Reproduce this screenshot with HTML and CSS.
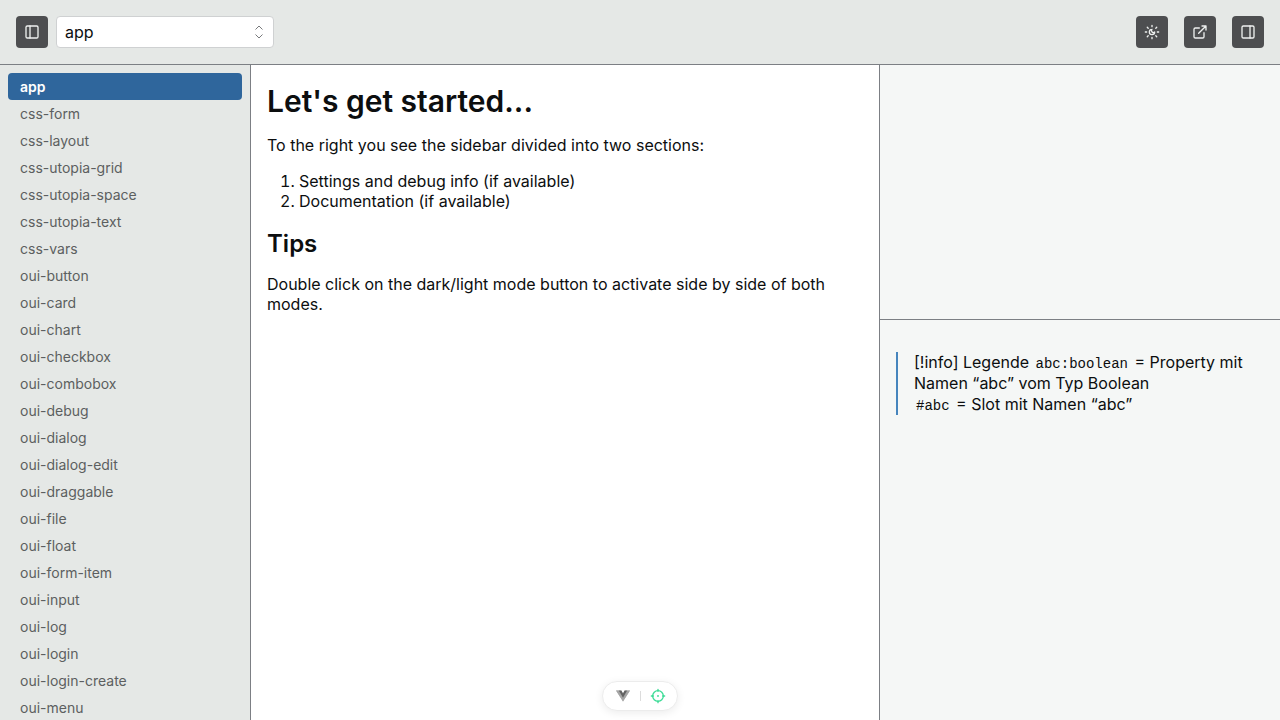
FILE: index.html
```html
<!DOCTYPE html>
<html lang="en">
<head>
<meta charset="utf-8">
<meta name="viewport" content="width=device-width, initial-scale=1">
<title>app</title>
<link rel="stylesheet" href="styles.css">
</head>
<body>
<div class="app">
  <header class="topbar">
    <button class="icon-button" type="button" aria-label="Toggle navigation">
      <svg viewBox="0 0 24 24"><rect x="3" y="3" width="18" height="18" rx="2"/><path d="M9 3v18"/></svg>
    </button>
    <div class="picker">
      <select class="picker-select" aria-label="Component">
        <option>app</option>
        <option>css-form</option>
        <option>css-layout</option>
      </select>
      <svg class="picker-arrows" viewBox="0 0 10 14"><path d="M1.500 4.500 5 1l3.500 3.500M1.500 9.500 5 13l3.500-3.500"/></svg>
    </div>
    <div class="actions">
      <button class="icon-button" type="button" aria-label="Dark or light mode">
        <svg viewBox="0 0 24 24"><path d="M12 8a2.830 2.830 0 0 0 4 4 4 4 0 1 1-4-4"/><path d="M12 2v2M12 20v2M4.900 4.900l1.400 1.400M17.700 17.700l1.400 1.400M2 12h2M20 12h2M6.300 17.700l-1.400 1.400M19.100 4.900l-1.400 1.400"/></svg>
      </button>
      <button class="icon-button" type="button" aria-label="Open in new window">
        <svg viewBox="0 0 24 24"><path d="M18 13v6a2 2 0 0 1-2 2H5a2 2 0 0 1-2-2V8a2 2 0 0 1 2-2h6"/><path d="M15 3h6v6M10 14 21 3"/></svg>
      </button>
      <button class="icon-button" type="button" aria-label="Toggle sidebar">
        <svg viewBox="0 0 24 24"><rect x="3" y="3" width="18" height="18" rx="2"/><path d="M15 3v18"/></svg>
      </button>
    </div>
  </header>
  <div class="columns">
    <nav class="nav" aria-label="Components">
      <a class="nav-link active" href="#app">app</a>
      <a class="nav-link" href="#css-form">css-form</a>
      <a class="nav-link" href="#css-layout">css-layout</a>
      <a class="nav-link" href="#css-utopia-grid">css-utopia-grid</a>
      <a class="nav-link" href="#css-utopia-space">css-utopia-space</a>
      <a class="nav-link" href="#css-utopia-text">css-utopia-text</a>
      <a class="nav-link" href="#css-vars">css-vars</a>
      <a class="nav-link" href="#oui-button">oui-button</a>
      <a class="nav-link" href="#oui-card">oui-card</a>
      <a class="nav-link" href="#oui-chart">oui-chart</a>
      <a class="nav-link" href="#oui-checkbox">oui-checkbox</a>
      <a class="nav-link" href="#oui-combobox">oui-combobox</a>
      <a class="nav-link" href="#oui-debug">oui-debug</a>
      <a class="nav-link" href="#oui-dialog">oui-dialog</a>
      <a class="nav-link" href="#oui-dialog-edit">oui-dialog-edit</a>
      <a class="nav-link" href="#oui-draggable">oui-draggable</a>
      <a class="nav-link" href="#oui-file">oui-file</a>
      <a class="nav-link" href="#oui-float">oui-float</a>
      <a class="nav-link" href="#oui-form-item">oui-form-item</a>
      <a class="nav-link" href="#oui-input">oui-input</a>
      <a class="nav-link" href="#oui-log">oui-log</a>
      <a class="nav-link" href="#oui-login">oui-login</a>
      <a class="nav-link" href="#oui-login-create">oui-login-create</a>
      <a class="nav-link" href="#oui-menu">oui-menu</a>
    </nav>
    <main class="content">
      <h1>Let's get started...</h1>
      <p>To the right you see the sidebar divided into two sections:</p>
      <ol>
        <li>Settings and debug info (if available)</li>
        <li>Documentation (if available)</li>
      </ol>
      <h2>Tips</h2>
      <p>Double click on the dark/light mode button to activate side by side of both modes.</p>
    </main>
    <aside class="side">
      <section class="settings" aria-label="Settings"></section>
      <section class="docs" aria-label="Documentation">
        <blockquote>[!info] Legende <code>abc:boolean</code> = Property mit Namen “abc” vom Typ Boolean<br><code>#abc</code> = Slot mit Namen “abc”</blockquote>
      </section>
    </aside>
  </div>
</div>
<div class="devtools">
  <button class="tool" type="button" aria-label="Toggle devtools">
    <svg viewBox="0 0 256 198"><path fill="#b5b5b5" d="M204.800 0H256L128 198 0 0h97.920L128 51.200 157.440 0z"/><path fill="#a5a5a5" d="m0 0 128 198L256 0h-51.200L128 132.480 50.560 0z"/><path fill="#626262" d="m50.560 0 77.440 133.120L204.800 0h-47.360L128 51.200 97.920 0z"/></svg>
  </button>
  <span class="divider"></span>
  <button class="tool inspect" type="button" aria-label="Inspect component">
    <svg viewBox="0 0 24 24"><circle cx="12" cy="12" r="8"/><path d="M12 2v3M12 19v3M2 12h3M19 12h3"/><circle cx="12" cy="12" r=".5"/></svg>
  </button>
</div>
</body>
</html>
```
FILE: styles.css
```css
* { box-sizing: border-box; }

body {
  margin: 0;
  font: 16px/20px Inter, "Liberation Sans", sans-serif;
  color: #0c0e0f;
  background: #fff;
}

.app {
  display: flex;
  flex-direction: column;
  height: 100vh;
  overflow: hidden;
}

.topbar {
  display: flex;
  flex: none;
  align-items: center;
  gap: 8px;
  padding: 16px;
  background: #e5e8e6;
  border-bottom: 1px solid #7c7f84;
}

.icon-button {
  display: grid;
  place-items: center;
  width: 32px;
  height: 32px;
  padding: 0;
  border: 0;
  border-radius: 4px;
  background: #4d4e50;
  color: #eef0ef;
}

.icon-button svg {
  width: 16px;
  height: 16px;
  fill: none;
  stroke: currentColor;
  stroke-width: 2;
  stroke-linecap: round;
  stroke-linejoin: round;
}

.picker {
  display: grid;
  align-items: center;
  width: 218px;
}

.picker > * { grid-area: 1 / 1; }

.picker-select {
  appearance: none;
  width: 100%;
  height: 32px;
  padding: 0 32px 0 8px;
  border: 1px solid #cfd1d2;
  border-radius: 4px;
  background: #fff;
  color: #0c0e0f;
  font: inherit;
}

.picker-arrows {
  justify-self: end;
  width: 10px;
  height: 14px;
  margin-right: 10px;
  fill: none;
  stroke: #77797b;
  stroke-width: 1;
  pointer-events: none;
}

.actions {
  display: flex;
  gap: 16px;
  margin-left: auto;
}

.columns {
  display: grid;
  grid-template-columns: 251px 1fr 401px;
  flex: 1;
  min-height: 0;
}

.nav {
  padding: 8px;
  overflow: hidden;
  background: #e5e8e6;
  border-right: 1px solid #7c7f84;
}

.nav-link {
  display: block;
  padding: 4px 12px;
  border-radius: 4px;
  font-size: 14px;
  line-height: 19px;
  color: #5c5f60;
  text-decoration: none;
}

.nav-link.active {
  background: #2f669c;
  color: #fff;
  font-weight: 600;
}

.content {
  padding: 16px;
  overflow: auto;
}

h1, h2 {
  margin: 0 0 14px;
  font-weight: 600;
}

h1 { font-size: 30px; line-height: 40px; }
h2 { font-size: 24px; line-height: 33px; }
p { margin: 0 0 16px; }

ol {
  margin: 0 0 16px;
  padding-left: 32px;
}

.side {
  display: grid;
  grid-template-rows: 255px 1fr;
  background: #f5f7f6;
  border-left: 1px solid #7c7f84;
}

.settings { border-bottom: 1px solid #7c7f84; }

.docs { padding: 32px 16px; }

blockquote {
  margin: 0;
  padding-left: 16px;
  border-left: 2px solid #4685bd;
  line-height: 21px;
}

code {
  padding: 0 2px;
  font-family: "Liberation Mono", monospace;
  font-size: 14px;
  line-height: 16px;
}

.devtools {
  position: fixed;
  bottom: 9px;
  left: 50%;
  display: flex;
  align-items: center;
  justify-content: space-between;
  width: 76px;
  height: 30px;
  padding: 0 11px 0 13px;
  transform: translateX(-50%);
  border: 1px solid #ececec;
  border-radius: 15px;
  background: #fff;
  box-shadow: 0 2px 8px rgb(0 0 0 / 8%);
}

.tool {
  display: grid;
  place-items: center;
  padding: 0;
  border: 0;
  background: none;
}

.tool svg { width: 14px; height: 14px; }

.inspect svg {
  width: 16px;
  height: 16px;
  fill: none;
  stroke: #3ddc97;
  stroke-width: 2;
  stroke-linecap: round;
}

.divider {
  width: 1px;
  height: 10px;
  background: #dcdcdc;
}
```
